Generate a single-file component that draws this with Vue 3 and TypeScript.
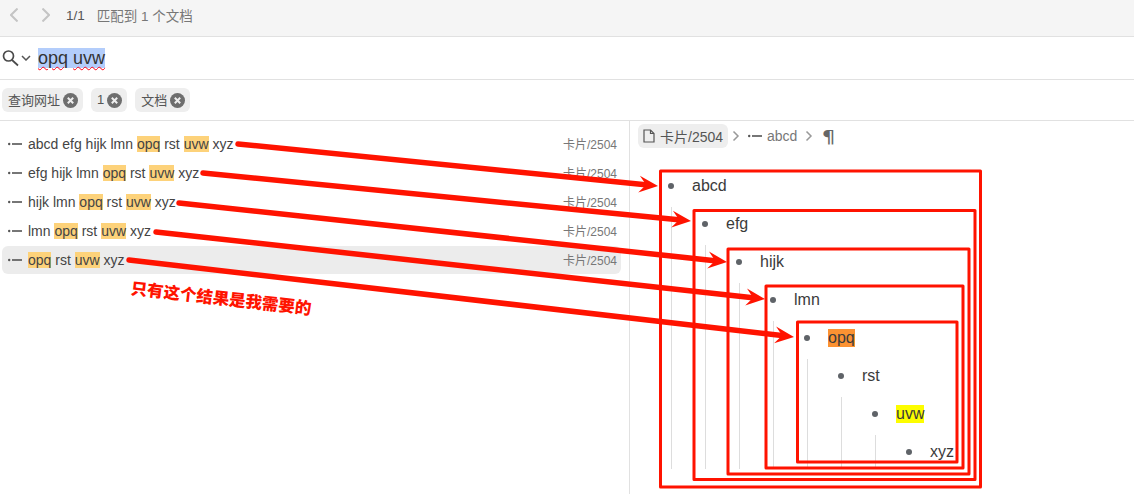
<script setup lang="ts">
interface Hit { text: string; hl?: boolean }
const parts = (s: string): Hit[] =>
  s.split(/(opq|uvw)/).filter(Boolean).map((t) => ({ text: t, hl: t === 'opq' || t === 'uvw' }))

const results = [
  'abcd efg hijk lmn opq rst uvw xyz',
  'efg hijk lmn opq rst uvw xyz',
  'hijk lmn opq rst uvw xyz',
  'lmn opq rst uvw xyz',
  'opq rst uvw xyz',
].map((s, i) => ({ id: i, hits: parts(s), active: i === 4 }))

const tags = ['查询网址', '1', '文档']

const boxes = [
  { x: 660.5, y: 171, w: 320, h: 316 },
  { x: 694, y: 210.5, w: 281, h: 269 },
  { x: 728, y: 249, w: 241, h: 225 },
  { x: 766, y: 286, w: 197, h: 182 },
  { x: 797.5, y: 322, w: 159.5, h: 140 },
]

const arrows = [
  [238, 144, 658, 186],
  [203, 173, 691, 221],
  [179, 203, 727, 262],
  [156, 232, 765, 299],
  [129, 260, 794, 337],
].map(([x1, y1, x2, y2]) => {
  const a = Math.atan2(y2 - y1, x2 - x1)
  const pt = (back: number, side: number) => {
    const px = x2 - back * Math.cos(a) - side * Math.sin(a)
    const py = y2 - back * Math.sin(a) + side * Math.cos(a)
    return `${px.toFixed(1)},${py.toFixed(1)}`
  }
  const nx = x2 - 10 * Math.cos(a)
  const ny = y2 - 10 * Math.sin(a)
  return {
    id: x1,
    x1, y1,
    x2: nx, y2: ny,
    head: [pt(0, 0), pt(19, 8.5), pt(12, 0), pt(19, -8.5)].join(' '),
  }
})
</script>

<template>
  <div class="page">
    <header class="nav">
      <svg class="nav-arrow" viewBox="0 0 8 14" width="8" height="14"><path d="M7.5.5 1 7l6.5 6.5" /></svg>
      <svg class="nav-arrow next" viewBox="0 0 8 14" width="8" height="14"><path d="M.5.5 7 7l-6.500 6.500" /></svg>
      <span class="count">1/1</span>
      <span class="summary">匹配到 1 个文档</span>
    </header>

    <div class="search">
      <svg class="mag" viewBox="0 0 18 18" width="18" height="18"><circle cx="6.500" cy="7" r="5" /><path d="M10 11l6 5.500" /></svg>
      <svg class="caret" viewBox="0 0 10 6" width="10" height="6"><path d="M1 1l4 4 4-4" /></svg>
      <span class="query"><span class="word">opq</span> <span class="word">uvw</span></span>
    </div>

    <div class="tags">
      <span v-for="t in tags" :key="t" class="tag">
        <span class="tag-label">{{ t }}</span>
        <svg class="close" viewBox="0 0 15 15" width="15" height="15"><circle cx="7.500" cy="7.500" r="7.500" /><path d="M4.800 4.800l5.400 5.400M10.200 4.800l-5.400 5.400" /></svg>
      </span>
    </div>

    <main class="split">
      <section class="results">
        <div v-for="r in results" :key="r.id" class="result" :class="{ active: r.active }">
          <svg class="block" viewBox="0 0 14 4" width="14" height="4"><circle cx="1.200" cy="2" r="1.200" /><rect x="4" y="1.200" width="10" height="1.600" /></svg>
          <span class="result-text"><template v-for="(h, i) in r.hits" :key="i"><mark v-if="h.hl">{{ h.text }}</mark><template v-else>{{ h.text }}</template></template></span>
          <span class="path">卡片/2504</span>
        </div>
      </section>

      <section class="detail">
        <nav class="crumbs">
          <span class="chip">
            <svg class="doc" viewBox="0 0 12 14" width="12" height="14"><path d="M1 1h6.500L11 4.500V13H1z" /><path d="M7.500 1v3.500H11" /></svg>
            卡片/2504
          </span>
          <svg class="chev" viewBox="0 0 8 12" width="8" height="12"><path d="M1.500 1.500 6 6l-4.500 4.500" /></svg>
          <span class="crumb">
            <svg class="block" viewBox="0 0 14 4" width="14" height="4"><circle cx="1.200" cy="2" r="1.200" /><rect x="4" y="1.200" width="10" height="1.600" /></svg>
            abcd
          </span>
          <svg class="chev" viewBox="0 0 8 12" width="8" height="12"><path d="M1.500 1.500 6 6l-4.500 4.500" /></svg>
          <span class="pilcrow">¶</span>
        </nav>

        <div class="tree">
          <div class="node">
            <div class="row"><i class="dot"></i><span>abcd</span></div>
            <div class="node">
              <div class="row"><i class="dot"></i><span>efg</span></div>
              <div class="node">
                <div class="row"><i class="dot"></i><span>hijk</span></div>
                <div class="node">
                  <div class="row"><i class="dot"></i><span>lmn</span></div>
                  <div class="node">
                    <div class="row"><i class="dot"></i><span class="orange">opq</span></div>
                    <div class="node">
                      <div class="row"><i class="dot"></i><span>rst</span></div>
                      <div class="node">
                        <div class="row"><i class="dot"></i><span class="yellow">uvw</span></div>
                        <div class="node">
                          <div class="row"><i class="dot"></i><span>xyz</span></div>
                        </div>
                      </div>
                    </div>
                  </div>
                </div>
              </div>
            </div>
          </div>
        </div>
      </section>
    </main>

    <svg class="overlay" width="1134" height="494" viewBox="0 0 1134 494">
      <rect v-for="b in boxes" :key="b.x" :x="b.x" :y="b.y" :width="b.w" :height="b.h" class="box" />
      <g v-for="a in arrows" :key="a.id">
        <line :x1="a.x1" :y1="a.y1" :x2="a.x2" :y2="a.y2" class="shaft" />
        <polygon :points="a.head" class="head" />
      </g>
    </svg>
    <span class="note">只有这个结果是我需要的</span>
  </div>
</template>

<style scoped>
.page {
  position: relative;
  width: 1134px;
  height: 494px;
  overflow: hidden;
  background: #fff;
  color: #3f3f3f;
  font-family: "Liberation Sans", "Noto Sans CJK SC", sans-serif;
  font-size: 14px;
}
.nav {
  height: 30px;
  padding: 0 0 6px 10px;
  display: flex;
  align-items: center;
  background: #f5f5f5;
  border-bottom: 1px solid #e1e1e1;
}
.nav-arrow { fill: none; stroke: #c4c4c4; stroke-width: 2; }
.nav-arrow.next { margin-left: 24px; }
.count { margin-left: 16px; font-size: 13.500px; color: #555; }
.summary { margin-left: 12px; font-size: 13.500px; color: #777; }
.search {
  height: 42px;
  display: flex;
  align-items: center;
  padding-left: 2px;
  border-bottom: 1px solid #e1e1e1;
}
.mag { fill: none; stroke: #4a4a4a; stroke-width: 1.700; }
.caret { fill: none; stroke: #555; stroke-width: 1.500; margin-left: 1px; }
.query { margin-left: 7px; font-size: 18px; line-height: 20px; background: #b3cdfb; color: #333; }
.word { text-decoration: underline wavy #f01; text-decoration-thickness: 1px; text-underline-offset: 2px; }
.tags {
  height: 40px;
  display: flex;
  align-items: center;
  gap: 8px;
  padding-left: 2px;
  border-bottom: 1px solid #e1e1e1;
}
.tag {
  display: flex;
  align-items: center;
  gap: 3px;
  height: 24px;
  padding: 0 5px 0 6px;
  border-radius: 6px;
  background: #eeeeee;
  color: #555;
  font-size: 13px;
}
.tag-label { margin-top: -2px; }
.close circle { fill: #6e6e6e; }
.close path { stroke: #eee; stroke-width: 2; }
.split { display: flex; height: 373px; }
.results {
  padding: 9px 8px 0 2px;
  box-sizing: border-box;
  border-right: 1px solid #e1e1e1;
  flex: none;
  width: 630px;
}
.result {
  height: 28px;
  margin-bottom: 1px;
  display: flex;
  align-items: center;
  padding: 0 4px 0 6px;
  border-radius: 6px;
}
.result.active { background: #ececec; }
.block { fill: #555; flex: none; }
.result-text { margin-left: 6px; flex: 1; color: #444; font-size: 14px; }
mark { background: #fdd27a; color: inherit; }
.path { font-size: 12px; color: #777; margin-top: -1px; }
.detail { flex: 1; min-width: 0; padding: 3px 0 0 8px; }
.crumbs { display: flex; align-items: center; height: 24px; font-size: 14px; color: #777; }
.chip {
  display: flex;
  align-items: center;
  gap: 5px;
  height: 24px;
  box-sizing: border-box;
  padding: 0 5px 1px 5px;
  border-radius: 6px;
  background: #eeeeee;
  color: #555;
}
.doc { fill: none; stroke: #555; stroke-width: 1.200; }
.chev { fill: none; stroke: #999; stroke-width: 1.500; margin: 0 4px; }
.crumb { display: flex; align-items: center; gap: 5px; margin: 0 4px; }
.pilcrow { margin-left: 6px; font-family: "DejaVu Sans", sans-serif; font-size: 18px; color: #666; transform: scaleX(1.200); }
.tree { margin: 19px 0 0 0; }
.tree > .node { padding-left: 0; }
.tree > .node::before { display: none; }
.node { position: relative; padding-left: 34px; }
.node .node::before {
  content: "";
  position: absolute;
  left: -1px;
  top: 2px;
  bottom: 2px;
  width: 1px;
  background: #dddddd;
}
.tree > .node > .node { margin-left: 34px; }
.row { height: 38px; display: flex; align-items: center; font-size: 16px; color: #3b3b3b; }
.dot { width: 6px; height: 6px; border-radius: 50%; background: #5f6368; margin-left: 30px; margin-right: 18px; }
.node .node .row { margin-left: -34px; }
.orange { background: #fb9232; }
.yellow { background: #fdfd00; }
.overlay { position: absolute; inset: 0; pointer-events: none; }
.box { fill: none; stroke: #ff1300; stroke-width: 3; stroke-linejoin: round; }
.shaft { stroke: #ff1300; stroke-width: 5.500; stroke-linecap: round; }
.head { fill: #ff1300; }
.note {
  position: absolute;
  left: 131px;
  top: 275px;
  font-size: 16.500px;
  font-weight: 900;
  color: #ff1300;
  white-space: nowrap;
  transform: rotate(6.500deg);
  transform-origin: left center;
}
</style>
